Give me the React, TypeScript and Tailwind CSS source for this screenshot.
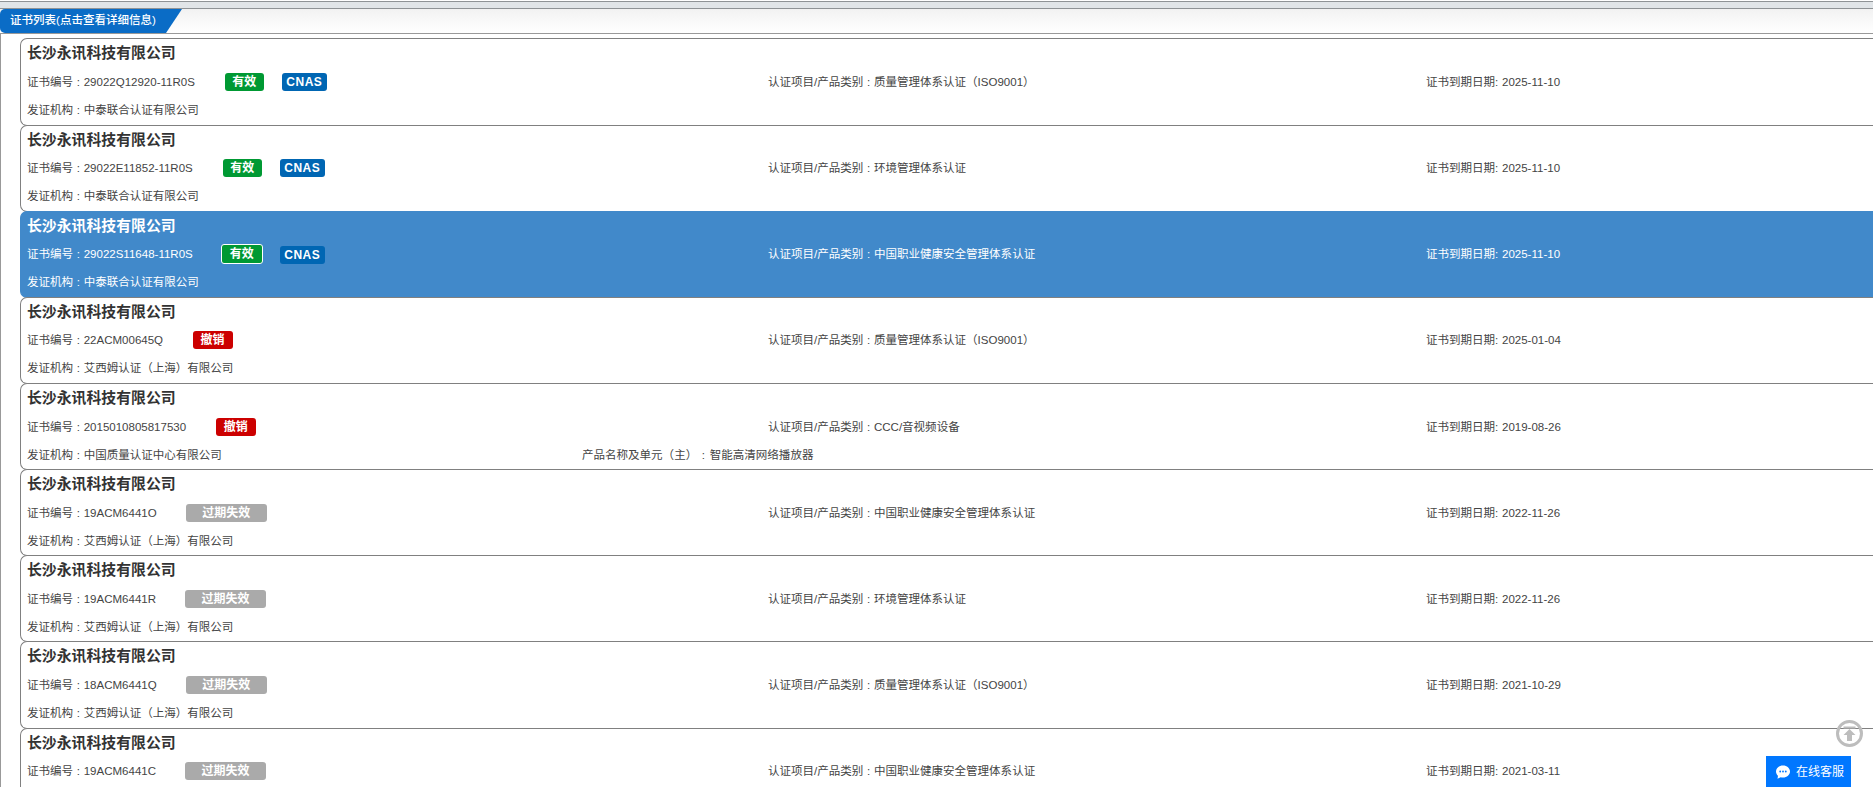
const FONT = "font-['Liberation_Sans','Noto_Sans_CJK_SC',sans-serif]";

type Cert = {
  no: string;
  badge: "valid" | "revoked" | "expired";
  cnas?: boolean;
  item: string;
  date: string;
  org?: string;
  product?: string;
  active?: boolean;
};

const certs: Cert[] = [
  { no: "29022Q12920-11R0S", badge: "valid", cnas: true, item: "质量管理体系认证（ISO9001）", date: "2025-11-10", org: "中泰联合认证有限公司" },
  { no: "29022E11852-11R0S", badge: "valid", cnas: true, item: "环境管理体系认证", date: "2025-11-10", org: "中泰联合认证有限公司" },
  { no: "29022S11648-11R0S", badge: "valid", cnas: true, item: "中国职业健康安全管理体系认证", date: "2025-11-10", org: "中泰联合认证有限公司", active: true },
  { no: "22ACM00645Q", badge: "revoked", item: "质量管理体系认证（ISO9001）", date: "2025-01-04", org: "艾西姆认证（上海）有限公司" },
  { no: "2015010805817530", badge: "revoked", item: "CCC/音视频设备", date: "2019-08-26", org: "中国质量认证中心有限公司", product: "智能高清网络播放器" },
  { no: "19ACM6441O", badge: "expired", item: "中国职业健康安全管理体系认证", date: "2022-11-26", org: "艾西姆认证（上海）有限公司" },
  { no: "19ACM6441R", badge: "expired", item: "环境管理体系认证", date: "2022-11-26", org: "艾西姆认证（上海）有限公司" },
  { no: "18ACM6441Q", badge: "expired", item: "质量管理体系认证（ISO9001）", date: "2021-10-29", org: "艾西姆认证（上海）有限公司" },
  { no: "19ACM6441C", badge: "expired", item: "中国职业健康安全管理体系认证", date: "2021-03-11" },
];

function Badge({ cert }: { cert: Cert }) {
  const base = "inline-block rounded-[3px] text-center text-[12px] font-bold text-white ";
  if (cert.badge === "valid") {
    return cert.active ? (
      <span className={base + "ml-[28px] h-[20px] w-[42px] border border-white bg-[#009933] leading-[18px]"}>有效</span>
    ) : (
      <span className={base + "ml-[30px] h-[18px] w-[39px] bg-[#009933] leading-[18px]"}>有效</span>
    );
  }
  if (cert.badge === "revoked") {
    return <span className={base + "ml-[29.5px] h-[18px] w-[40px] bg-[#cc0000] leading-[18px]"}>撤销</span>;
  }
  return <span className={base + "ml-[29px] h-[18px] w-[81px] bg-[#aaaaaa] leading-[18px]"}>过期失效</span>;
}

function Card({ cert }: { cert: Cert }) {
  const text = cert.active ? "text-white" : "text-[#444444]";
  return (
    <div
      className={
        "-mt-px h-[87.17px] w-[1900px] shrink-0 rounded-l-[7px] border-y border-l px-[6px] pt-[3px] first:mt-0 " +
        (cert.active ? "border-[#4189ca] bg-[#4189ca]" : "border-[#808080] bg-white")
      }
    >
      <div className={"h-[22px] text-[14.88px] leading-[22px] font-bold " + (cert.active ? "text-white" : "text-[#333333]")}>
        长沙永讯科技有限公司
      </div>
      <div className={"mt-[7.5px] flex h-[20px] items-center text-[11.52px] leading-[20px] [word-spacing:0.5px] " + text}>
        <div className="flex w-[741px] shrink-0 items-center">
          <span>证书编号 : {cert.no}</span>
          <Badge cert={cert} />
          {cert.cnas && (
            <span
              className={
                "inline-block h-[18px] w-[45px] rounded-[3px] bg-[#0066b3] text-center text-[12px] leading-[18px] font-bold tracking-[0.5px] text-white " +
                (cert.active ? "mt-[2px] ml-[17px] w-[44px]" : "ml-[18px]")
              }
            >
              CNAS
            </span>
          )}
        </div>
        <div className="w-[658px] shrink-0">认证项目/产品类别 : {cert.item}</div>
        <div className="shrink-0">证书到期日期: {cert.date}</div>
      </div>
      {cert.org && (
        <div className={"mt-[8px] flex h-[20px] text-[11.52px] leading-[20px] [word-spacing:0.5px] " + text}>
          <div className="w-[555px] shrink-0">发证机构 : {cert.org}</div>
          {cert.product && <div className="[word-spacing:1.5px]">产品名称及单元（主） : {cert.product}</div>}
        </div>
      )}
    </div>
  );
}

export default function App() {
  return (
    <div className={"relative flex h-[787px] w-full flex-col overflow-hidden bg-white " + FONT}>
      <div className="mt-px h-[8px] shrink-0 border-y border-[#8f9396] bg-[#e1e5e8]" />
      <div className="flex h-[25px] shrink-0 border-b border-[#999999] bg-gradient-to-b from-[#f2f2f2] to-white">
        <div className="flex h-[24px] w-[182px] items-center rounded-l-[5px] bg-[#0a6cc6] pl-[10px] text-[11.52px] font-medium text-white [clip-path:polygon(0_0,100%_0,166px_100%,0_100%)]">
          证书列表(点击查看详细信息)
        </div>
      </div>
      <div className="flex min-h-0 flex-1 flex-col border-l border-[#999999] pt-[4.4px] pl-[19px]">
        {certs.map((c) => (
          <Card key={c.no} cert={c} />
        ))}
      </div>

      <div className="absolute top-[720px] left-[1836px] h-[27px] w-[27px]">
        <svg viewBox="0 0 27 27" width="27" height="27">
          <circle cx="13.5" cy="13.5" r="12" fill="none" stroke="#bdbdbd" strokeWidth="3" />
          <rect x="7.5" y="6.5" width="12" height="2" fill="#bdbdbd" />
          <path d="M13.5 9 L19.5 15 H16 V21 H11 V15 H7.5 Z" fill="#bdbdbd" />
        </svg>
      </div>
      <div className="absolute top-[756px] left-[1766px] flex h-[31px] w-[85px] items-center bg-[#0077ff] pl-[9px] text-[12px] text-white">
        <svg viewBox="0 0 16 16" width="16" height="16" className="mr-[5px]">
          <path d="M8 1.5 C12 1.5 15 4.2 15 7.5 C15 10.8 12 13.5 8 13.5 C7.2 13.5 6.4 13.4 5.7 13.2 L2.5 14.8 L3 11.8 C1.8 10.7 1 9.2 1 7.5 C1 4.2 4 1.5 8 1.5 Z" fill="#ffffff" />
          <circle cx="5.2" cy="7.5" r="0.9" fill="#0077ff" />
          <circle cx="8" cy="7.5" r="0.9" fill="#0077ff" />
          <circle cx="10.8" cy="7.5" r="0.9" fill="#0077ff" />
        </svg>
        在线客服
      </div>
    </div>
  );
}
